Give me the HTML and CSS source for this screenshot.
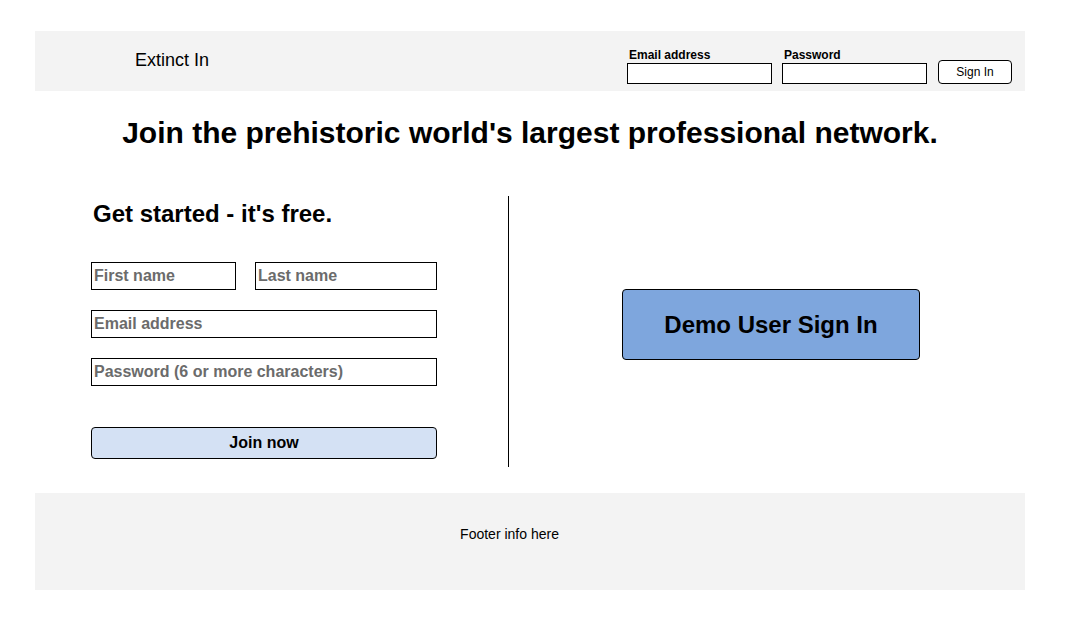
FILE: index.html
```html
<!DOCTYPE html>
<html>
<head>
<meta charset="utf-8">
<title>Extinct In</title>
<link rel="stylesheet" href="styles.css">
</head>
<body>
<div class="page">
  <header class="topbar">
    <div class="logo">Extinct In</div>
    <form class="login">
      <label class="field">
        <span class="field-label">Email address</span>
        <input class="field-input" type="text">
      </label>
      <label class="field">
        <span class="field-label">Password</span>
        <input class="field-input" type="password">
      </label>
      <button class="signin" type="button">Sign In</button>
    </form>
  </header>
  <main class="main">
    <h1 class="headline">Join the prehistoric world's largest professional network.</h1>
    <div class="columns">
      <section class="signup">
        <h2 class="signup-title">Get started - it's free.</h2>
        <div class="row">
          <input class="box first" type="text" placeholder="First name">
          <input class="box last" type="text" placeholder="Last name">
        </div>
        <div class="row">
          <input class="box full" type="text" placeholder="Email address">
        </div>
        <div class="row">
          <input class="box full" type="password" placeholder="Password (6 or more characters)">
        </div>
        <button class="join" type="button">Join now</button>
      </section>
      <div class="divider"></div>
      <section class="demo">
        <button class="demo-btn" type="button">Demo User Sign In</button>
      </section>
    </div>
  </main>
  <footer class="footer">Footer info here</footer>
</div>
</body>
</html>
```
FILE: styles.css
```css
* { box-sizing: border-box; }
html, body { margin: 0; padding: 0; background: #fff; }
body { font-family: "Liberation Sans", Arial, sans-serif; color: #000; }
.page { padding: 31px 41px 0 35px; width: 1066px; }

.topbar {
  height: 60px;
  background: #f3f3f3;
  display: flex;
  align-items: flex-start;
  justify-content: space-between;
  padding: 0 13px 0 100px;
}
.logo { font-size: 18px; line-height: 20px; margin-top: 19px; }
.login { display: flex; align-items: flex-start; margin-top: 17px; }
.field { display: flex; flex-direction: column; margin-right: 10px; }
.field-label { font-size: 12px; font-weight: bold; line-height: 14px; padding-left: 2px; margin-bottom: 1px; }
.field-input {
  width: 145px; height: 21px; border: 1px solid #000; background: #fff;
  margin: 0; padding: 0 2px; font: inherit;
}
.signin {
  margin: 12px 0 0 1px; width: 74px; height: 24px;
  border: 1px solid #000; border-radius: 4px; background: #fff;
  font-family: "Liberation Sans", Arial, sans-serif; font-size: 12px; color: #000; padding: 0;
}

.main { padding-top: 25px; }
.headline { margin: 0; text-align: center; font-size: 30px; line-height: 34px; font-weight: bold; }
.columns { display: flex; margin-top: 46px; height: 271px; }
.signup { width: 473px; padding: 4px 0 0 56px; }
.signup-title { margin: 0 0 34px 2px; font-size: 24px; line-height: 28px; font-weight: bold; }
.row { display: flex; margin-bottom: 20px; }
.box {
  height: 28px; border: 1px solid #000; background: #fff; margin: 0;
  padding: 0 2px; font-family: "Liberation Sans", Arial, sans-serif;
  font-size: 16px; font-weight: bold; color: #000;
}
.box::placeholder { color: #6b6b6b; opacity: 1; }
.first { width: 145px; margin-right: 19px; }
.last { width: 182px; }
.full { width: 346px; }
.join {
  margin-top: 21px; width: 346px; height: 32px;
  border: 1px solid #000; border-radius: 4px; background: #d4e1f4;
  font-family: "Liberation Sans", Arial, sans-serif; font-size: 16px; font-weight: bold; color: #000; padding: 0;
}
.divider { width: 1px; background: #000; }
.demo { flex: 1; padding: 93px 0 0 113px; }
.demo-btn {
  width: 298px; height: 71px; border: 1px solid #000; border-radius: 4px;
  background: #7ea6dd; font-family: "Liberation Sans", Arial, sans-serif;
  font-size: 24px; font-weight: bold; color: #000; padding: 0;
}
.footer {
  margin-top: 26px; height: 97px; background: #f3f3f3;
  font-size: 14px; line-height: 16px; text-align: center;
  padding: 33px 41px 0 0;
}
```
